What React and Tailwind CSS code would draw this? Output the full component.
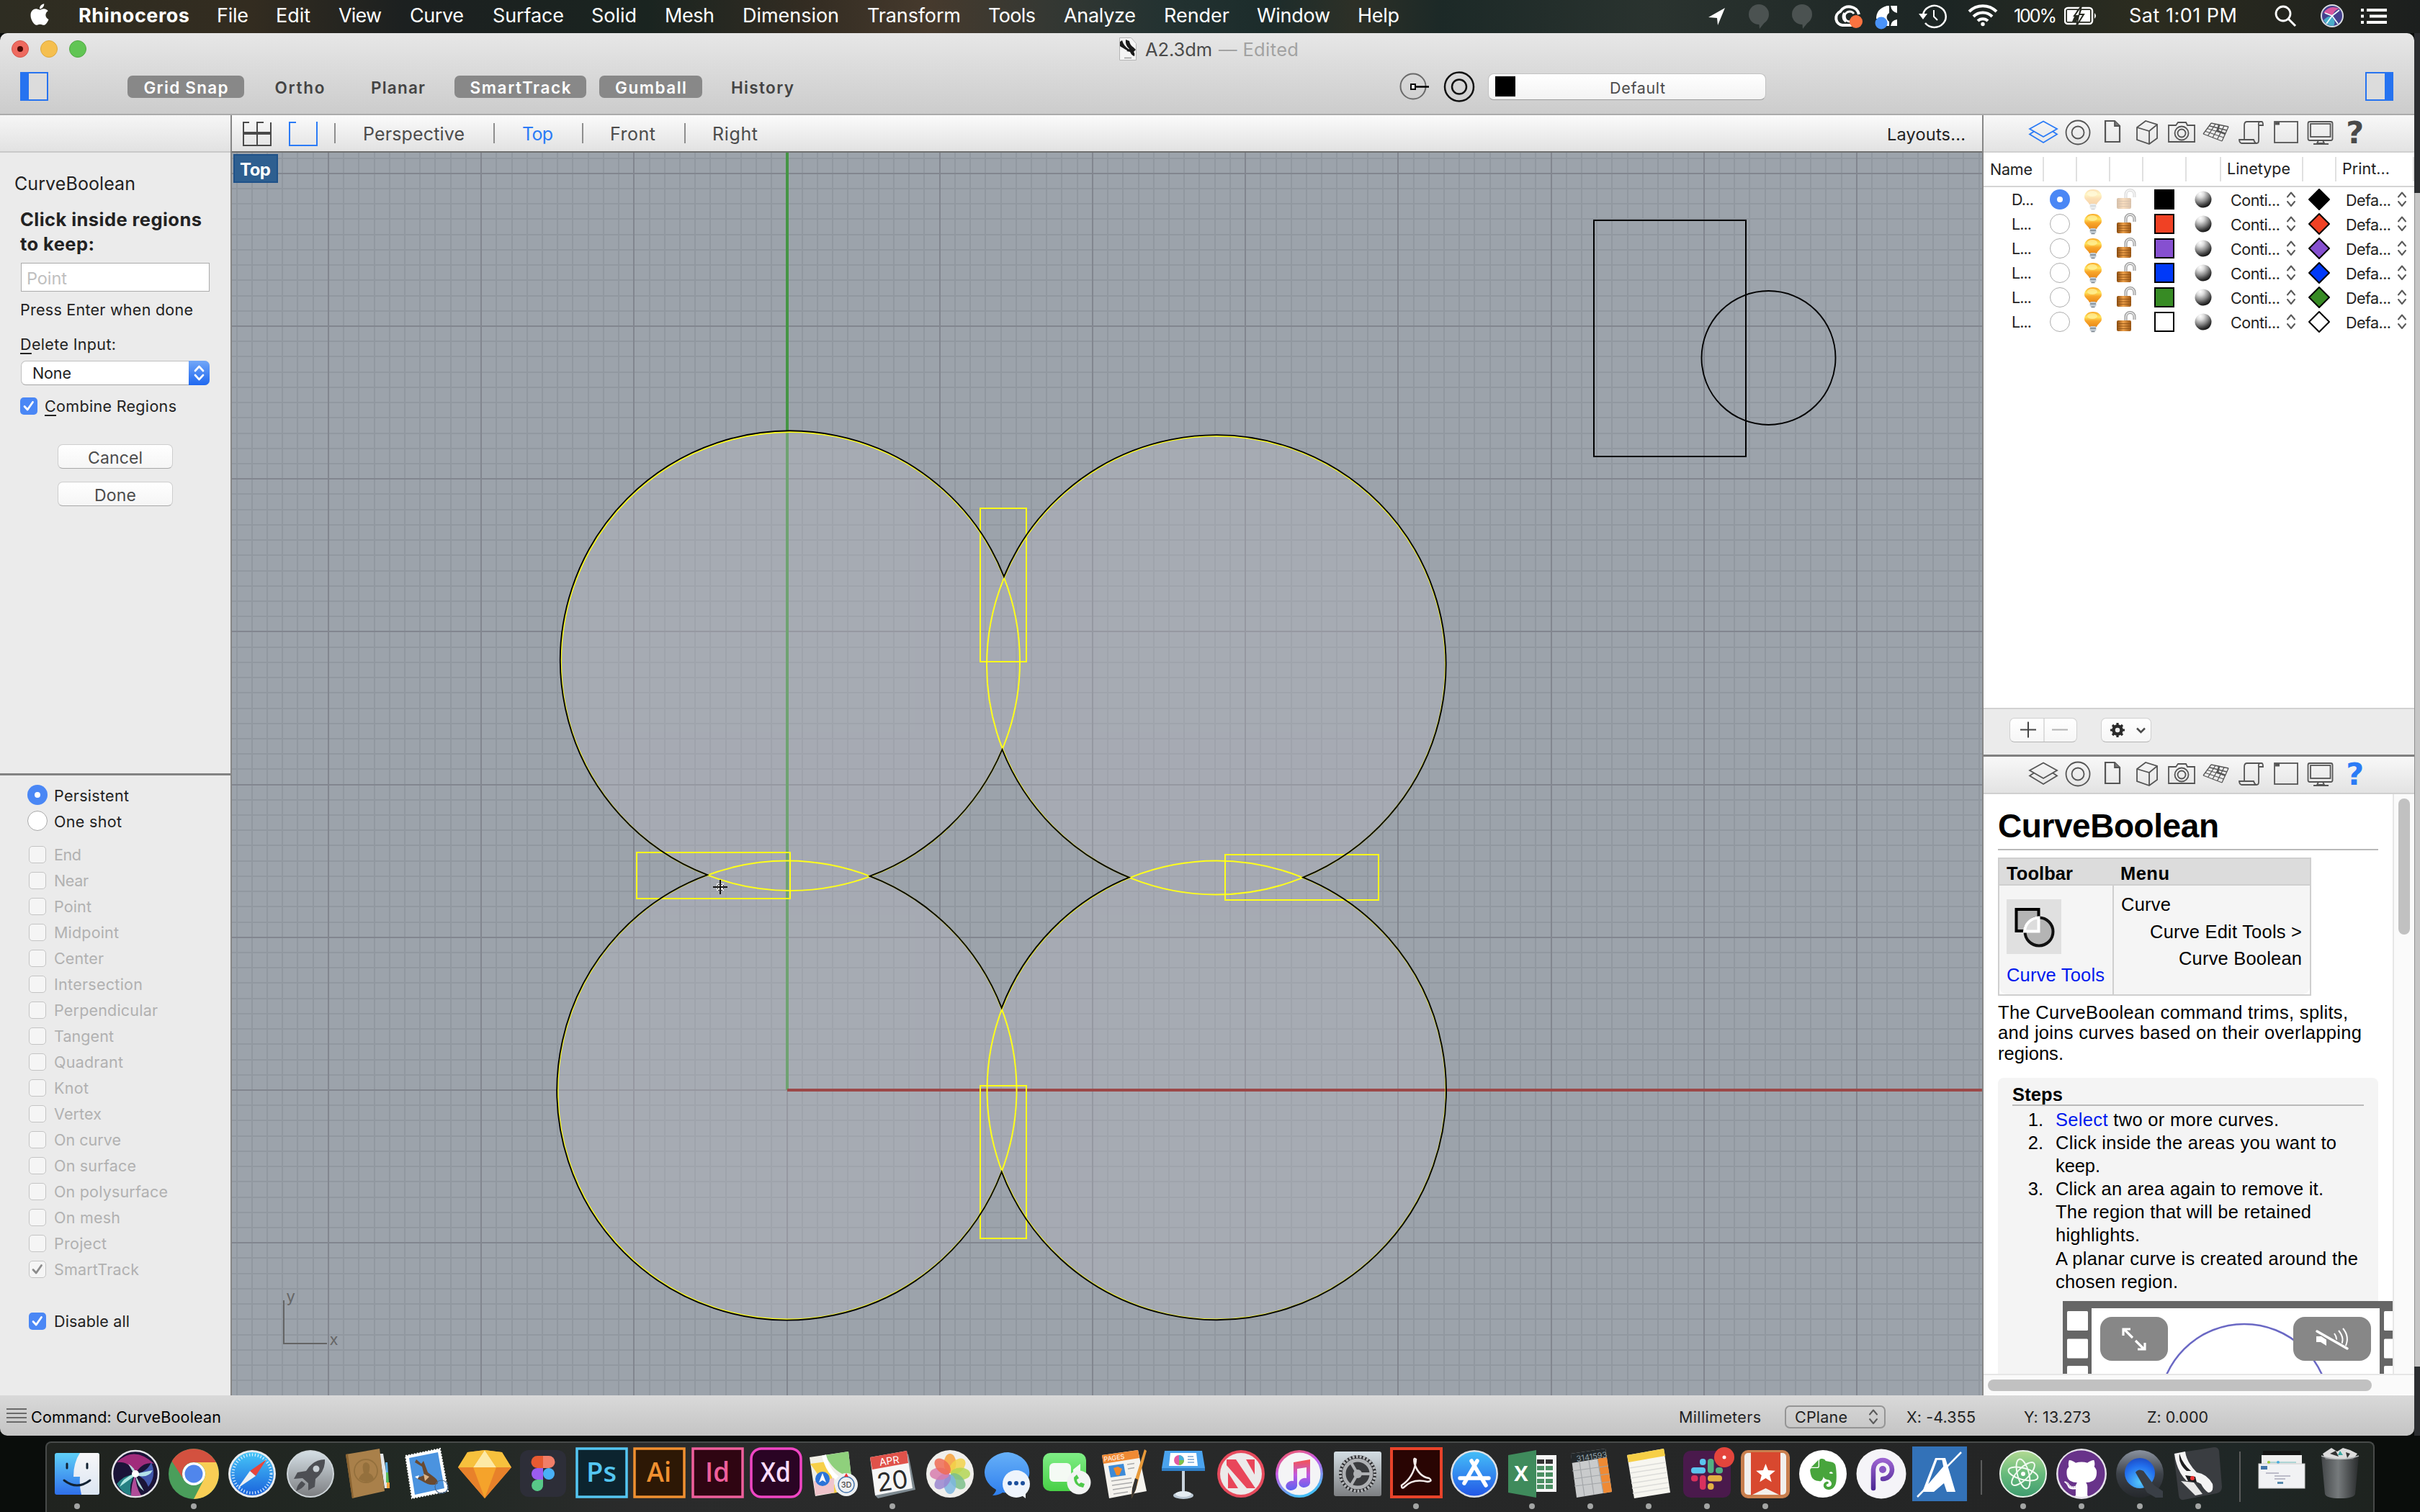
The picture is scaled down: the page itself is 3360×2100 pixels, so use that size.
import React, { useLayoutEffect, useRef } from "react";
import { FaApple, FaEvernote, FaGithub } from "react-icons/fa";

const UI = "font-['Inter',sans-serif]";
const DOC = "font-['Liberation_Sans',sans-serif]";

/* Single line of text whose tracking is adjusted so that it spans w pixels. */
function T({ w, className = "", children }) {
  const ref = useRef(null);
  useLayoutEffect(() => {
    const el = ref.current;
    if (!el || !w) return;
    el.style.letterSpacing = "0px";
    const n = el.textContent.length;
    if (n > 1) {
      const natural = el.getBoundingClientRect().width;
      const s = (w - natural) / (n - 1);
      el.style.letterSpacing = s + "px";
      el.style.marginRight = -s + "px";
    }
  });
  return (
    <span ref={ref} className={"inline-block shrink-0 whitespace-nowrap " + className}>
      {children}
    </span>
  );
}

function Gradients() {
  return (
    <svg className="absolute h-0 w-0">
      <defs>
        <radialGradient id="ball" cx="0.42" cy="0.12" r="0.9">
          <stop offset="0" stopColor="#ffffff" />
          <stop offset="0.25" stopColor="#dcdcdc" />
          <stop offset="0.55" stopColor="#8a8a8a" />
          <stop offset="0.8" stopColor="#3c3c3c" />
          <stop offset="1" stopColor="#0c0c0c" />
        </radialGradient>
        <linearGradient id="bulb" x1="0" y1="0" x2="0" y2="1">
          <stop offset="0" stopColor="#f9a826" />
          <stop offset="0.35" stopColor="#ffe45c" />
          <stop offset="0.6" stopColor="#f9a62a" />
          <stop offset="1" stopColor="#e88a1a" />
        </linearGradient>
        <linearGradient id="lock" x1="0" y1="0" x2="1" y2="0">
          <stop offset="0" stopColor="#8a4a0c" />
          <stop offset="0.45" stopColor="#eda04a" />
          <stop offset="1" stopColor="#9a5512" />
        </linearGradient>
        <radialGradient id="siri" cx="0.5" cy="0.5" r="0.5">
          <stop offset="0" stopColor="#f2ffff" />
          <stop offset="0.25" stopColor="#6fc7dc" />
          <stop offset="0.6" stopColor="#5a2a78" />
          <stop offset="1" stopColor="#1a1236" />
        </radialGradient>
        <linearGradient id="safari" x1="0" y1="0" x2="0" y2="1">
          <stop offset="0" stopColor="#46c6f8" />
          <stop offset="1" stopColor="#1a62dc" />
        </linearGradient>
        <linearGradient id="silver" x1="0" y1="0" x2="0" y2="1">
          <stop offset="0" stopColor="#d4dee4" />
          <stop offset="1" stopColor="#7d7f82" />
        </linearGradient>
        <linearGradient id="finderL" x1="0" y1="0" x2="0" y2="1">
          <stop offset="0" stopColor="#5fd0f8" />
          <stop offset="1" stopColor="#2f6fea" />
        </linearGradient>
        <linearGradient id="finderR" x1="0" y1="0" x2="0" y2="1">
          <stop offset="0" stopColor="#f7f7f9" />
          <stop offset="1" stopColor="#dbe5f2" />
        </linearGradient>
        <linearGradient id="itunes" x1="0" y1="0" x2="0.4" y2="1">
          <stop offset="0" stopColor="#f8584a" />
          <stop offset="0.45" stopColor="#c75bea" />
          <stop offset="1" stopColor="#46bdf5" />
        </linearGradient>
        <linearGradient id="note" x1="0" y1="0" x2="0" y2="1">
          <stop offset="0" stopColor="#f5534f" />
          <stop offset="0.5" stopColor="#c05ae0" />
          <stop offset="1" stopColor="#5a62f0" />
        </linearGradient>
        <linearGradient id="store" x1="0" y1="0" x2="0" y2="1">
          <stop offset="0" stopColor="#44bdf8" />
          <stop offset="1" stopColor="#2358e6" />
        </linearGradient>
        <linearGradient id="green" x1="0" y1="0" x2="0" y2="1">
          <stop offset="0" stopColor="#7fee86" />
          <stop offset="1" stopColor="#48cf46" />
        </linearGradient>
        <linearGradient id="chat" x1="0" y1="0" x2="0" y2="1">
          <stop offset="0" stopColor="#66b0f8" />
          <stop offset="1" stopColor="#2f7fee" />
        </linearGradient>
        <linearGradient id="atom" x1="0" y1="0" x2="0" y2="1">
          <stop offset="0" stopColor="#b2da92" />
          <stop offset="0.5" stopColor="#68bb7c" />
          <stop offset="1" stopColor="#3f9c70" />
        </linearGradient>
        <linearGradient id="purple" x1="0" y1="0" x2="0" y2="1">
          <stop offset="0" stopColor="#9a62cf" />
          <stop offset="1" stopColor="#4f2a96" />
        </linearGradient>
        <radialGradient id="qt" cx="0.5" cy="0.8" r="0.9">
          <stop offset="0" stopColor="#56c8fa" />
          <stop offset="0.6" stopColor="#2270ee" />
          <stop offset="1" stopColor="#1b3fb8" />
        </radialGradient>
        <linearGradient id="ring" x1="0" y1="0" x2="0" y2="1">
          <stop offset="0" stopColor="#8b93a0" />
          <stop offset="0.5" stopColor="#3d4249" />
          <stop offset="1" stopColor="#25282c" />
        </linearGradient>
        <linearGradient id="bin" x1="0" y1="0" x2="1" y2="0">
          <stop offset="0" stopColor="#4c4f52" />
          <stop offset="0.45" stopColor="#8c9093" />
          <stop offset="1" stopColor="#2b2d2f" />
        </linearGradient>
      </defs>
    </svg>
  );
}

/* ---------- menu bar ---------- */

const MENUS = [
  ["w-[192px]", "Rhinoceros", 154, "font-bold"],
  ["w-[82px]", "File", 44, ""],
  ["w-[87px]", "Edit", 48, ""],
  ["w-[99px]", "View", 60, ""],
  ["w-[115px]", "Curve", 75, ""],
  ["w-[137px]", "Surface", 99, ""],
  ["w-[102px]", "Solid", 63, ""],
  ["w-[108px]", "Mesh", 69, ""],
  ["w-[173px]", "Dimension", 134, ""],
  ["w-[168px]", "Transform", 130, ""],
  ["w-[105px]", "Tools", 66, ""],
  ["w-[139px]", "Analyze", 100, ""],
  ["w-[129px]", "Render", 91, ""],
  ["w-[140px]", "Window", 102, ""],
  ["w-[100px]", "Help", 58, ""],
];

function MenuBar() {
  return (
    <div className="flex h-[46px] w-full items-center bg-[linear-gradient(90deg,#2e2d22_0px,#332c20_350px,#1c2020_560px,#1a2420_900px,#332c22_1120px,#463a2d_1290px,#353833_1450px,#233231_1620px,#1c2c2b_1760px,#2d3027_1880px,#1c2927_2000px,#2a332f_2300px,#1c2524_2700px,#2c2c1f_2980px,#1c1f1e_3360px)] text-[27px] leading-[46px] text-white">
      <FaApple className="ml-[38px] mr-[37px] -mt-[6px] shrink-0" size={34} />
      {MENUS.map(([w, t, px, c]) => (
        <div key={t} className={"h-[46px] shrink-0 -mt-[2px] " + w}>
          <T w={px} className={c}>{t}</T>
        </div>
      ))}
      <svg className="ml-auto h-[46px] w-[424px] shrink-0" viewBox="2366 0 424 46">
        <path d="M2395 11 L2372 24 L2384 25 L2385 35 Z" fill="#fff" />
        <g fill="#4b5251">
          <circle cx="2442" cy="20" r="14" /><path d="M2442 30 h9 l-8 10 z" />
          <circle cx="2502" cy="20" r="14" /><path d="M2502 30 h9 l-8 10 z" />
        </g>
        <g fill="none" stroke="#fff" strokeWidth="4">
          <path d="M2572 35 h-14 a10 10 0 0 1 -3 -19 a14 13 0 0 1 26 4" />
          <path d="M2569 30 a7 7 0 1 1 5 -11 M2561 18 a8 8 0 0 0 2 12" strokeWidth="3" />
        </g>
        <circle cx="2577" cy="30" r="9" fill="#fb7340" />
        <path d="M2620 8 h3 v10 a10 8 0 0 0 0 12 v6 h-10 v-10 h-8 q0 -14 15 -18z M2625 8 h9 v10 q-8 -2 -9 -10z M2625 36 h9 v-9 q-8 1 -9 9z" fill="#fff" />
        <circle cx="2612" cy="32" r="8.500" fill="#4a93f8" />
        <path d="M2670 20 a16 15 0 1 1 3 12" fill="none" stroke="#fff" strokeWidth="2.5" />
        <path d="M2664 19 h12 l-6 8 z" fill="#fff" />
        <path d="M2685 14 v9 l5 5" fill="none" stroke="#fff" strokeWidth="2" />
        <g fill="none" stroke="#fff" strokeWidth="4">
          <path d="M2734 16 a27 27 0 0 1 38 0" />
          <path d="M2740 23 a18 18 0 0 1 26 0" />
          <path d="M2746 29 a10 10 0 0 1 14 0" />
        </g>
        <circle cx="2753" cy="33.500" r="2.700" fill="#fff" />
      </svg>
      <div className="-mt-[2px] ml-[6px] h-[46px] w-[70px] shrink-0 text-[25px]"><T w={60}>100%</T></div>
      <svg className="h-[46px] w-[48px] shrink-0" viewBox="2866 0 48 46">
        <rect x="2867" y="11" width="38" height="22" rx="4" fill="none" stroke="#fff" strokeWidth="2.500" />
        <path d="M2870 14 h14 l-7 16 h-7z M2890 14 h12 v16 h-19z" fill="#fff" />
        <path d="M2890 8 l-10 14 h6 l-3 14 l10 -16 h-6z" fill="#fff" stroke="#25281f" strokeWidth="2" />
        <path d="M2908 18 q4 4 0 8z" fill="#fff" />
      </svg>
      <div className="-mt-[2px] ml-[42px] h-[46px] w-[196px] shrink-0"><T w={150}>Sat 1:01 PM</T></div>
      <svg className="h-[46px] w-[208px] shrink-0" viewBox="3152 0 208 46">
        <circle cx="3170" cy="19" r="10" fill="none" stroke="#fff" strokeWidth="2.800" />
        <path d="M3177 26 l10 10" stroke="#fff" strokeWidth="3" />
        <circle cx="3238" cy="22" r="15" fill="#44408e" stroke="#d9dde2" strokeWidth="2" />
        <path d="M3226 18 q8 -12 22 -6 q-8 2 -10 12 q-4 -6 -12 -6z" fill="#e85aa0" opacity="0.9" />
        <path d="M3226 28 q8 -8 12 -4 q6 6 2 12 q-10 0 -14 -8z" fill="#4cc8d8" opacity="0.8" />
        <path d="M3230 33 l8 -11 l8 11 M3228 18 l10 4 l10 -8" stroke="#eff" strokeWidth="1.800" fill="none" />
        <g fill="#fff">
          {[12, 20.5, 29].map((y) => (
            <g key={y}><rect x="3278" y={y} width="4" height="4" /><rect x={y === 20.5 ? 3290 : 3286} y={y} width={y === 20.5 ? 24 : 28} height="4" /></g>
          ))}
        </g>
      </svg>
    </div>
  );
}

/* ---------- title bar ---------- */

function Pill({ on, box, w, children }) {
  return (
    <div className={"flex h-[31px] shrink-0 items-center justify-center rounded-[7px] text-[22.500px] font-semibold leading-[33px] " + box + (on ? " bg-[#888888] text-white" : " text-[#444444]")}>
      <T w={w} className="pt-[2px]">{children}</T>
    </div>
  );
}

function TitleBar() {
  return (
    <div className="h-[114px] w-full rounded-t-[10px] border-b-2 border-[#ababab] bg-gradient-to-b from-[#e7e7e7] to-[#cccccc]">
      <div className="flex h-[44px] items-center pl-4">
        <div className="flex gap-4">
          <div className="flex h-6 w-6 items-center justify-center rounded-full border border-[#d5564b] bg-[#ee6a5f]"><div className="h-2 w-2 rounded-full bg-[#4d0a05]" /></div>
          <div className="h-6 w-6 rounded-full border border-[#dba83f] bg-[#f5bf4f]" />
          <div className="h-6 w-6 rounded-full border border-[#52a845] bg-[#61c554]" />
        </div>
        <svg className="ml-[1434px] -mt-[1px] h-[32px] w-[24px]" viewBox="0 0 24 32">
          <path d="M0.500 0.500 h16 l7 8 v23 h-23z" fill="#f4f4f4" stroke="#b5b5b5" />
          <path d="M1 6 L4 4 Q6 12 14 17 L11 18 Q4 14 1 12z M9 3 L14 5 Q15 11 20 14 L23 17 L20 20 Q22 22 21 26 Q17 25 15 20 L10 19 L14 16 Q8 11 9 3z" fill="#1c1c1c" />
          <path d="M7 28.500 h10" stroke="#999" strokeWidth="1.500" />
        </svg>
        <div className="ml-[12px] h-[30px] w-[102px] text-[25.500px] leading-[32px] text-[#4a4a4a]"><T w={93}>A2.3dm</T></div>
        <div className="h-[30px] text-[25.500px] leading-[32px] text-[#a2a2a2]"><T w={111}>— Edited</T></div>
      </div>
      <div className="flex h-[60px] items-center">
        <div className="ml-[28px] mr-[110px] h-[40px] w-[39px] shrink-0 border-2 border-l-[12px] border-[#2673f0] bg-[#dcdcdc]" />
        <Pill on box="w-[162px]" w={117}>Grid Snap</Pill>
        <Pill box="ml-[43px] w-[68px]" w={69}>Ortho</Pill>
        <Pill box="ml-[65px] w-[75px]" w={75}>Planar</Pill>
        <Pill on box="ml-[41px] w-[183px]" w={140}>SmartTrack</Pill>
        <Pill on box="ml-[18px] w-[143px]" w={99}>Gumball</Pill>
        <Pill box="ml-[40px] w-[87px]" w={87}>History</Pill>
        <svg className="ml-[838px] h-[60px] w-[126px] shrink-0" viewBox="1940 90 126 60">
          <circle cx="1962" cy="120" r="17.500" fill="none" stroke="#6a6a6a" strokeWidth="2" />
          <path d="M1966 120.500 h18" stroke="#000" strokeWidth="2.500" />
          <rect x="1959" y="117" width="6" height="7" fill="#eee" stroke="#000" strokeWidth="2" />
          <circle cx="2026" cy="120.500" r="20" fill="none" stroke="#111" strokeWidth="2.500" />
          <circle cx="2026" cy="120.500" r="10" fill="none" stroke="#111" strokeWidth="2.500" />
        </svg>
        <div className="flex h-[37px] w-[386px] shrink-0 items-center rounded-[8px] border border-[#c2c2c2] border-b-[#9c9c9c] bg-gradient-to-b from-white to-[#f3f3f3]">
          <div className="ml-[9px] h-[28px] w-[28px] bg-black" />
          <div className="ml-[131px] h-[30px] text-[21.500px] leading-[34px] text-[#4c4c4c]"><T w={77}>Default</T></div>
        </div>
        <div className="ml-[832px] h-[40px] w-[39px] shrink-0 border-2 border-r-[12px] border-[#2673f0] bg-[#dcdcdc]" />
      </div>
    </div>
  );
}

/* ---------- left panel ---------- */

function Check({ on, dim }) {
  const box = on && !dim ? "bg-[#4a87f5]" : "border border-[#c4c4c4] bg-[#f5f5f5]";
  return (
    <div className={"flex h-6 w-6 shrink-0 items-center justify-center rounded-[5px] " + box}>
      {on && (
        <svg className="h-[18px] w-[18px]" viewBox="0 0 18 18">
          <path d="M3 9.500 L7.200 14 L14.500 3.500" fill="none" stroke={dim ? "#8c8c8c" : "#fff"} strokeWidth="2.800" strokeLinecap="round" strokeLinejoin="round" />
        </svg>
      )}
    </div>
  );
}

function Radio({ on }) {
  return on ? (
    <div className="flex h-7 w-7 shrink-0 items-center justify-center rounded-full bg-[#4a87f5]"><div className="h-2 w-2 rounded-full bg-white" /></div>
  ) : (
    <div className="h-7 w-7 shrink-0 rounded-full border-[1.500px] border-[#a8a8a8] bg-white" />
  );
}

const SNAPS = [
  ["End", 38], ["Near", 48], ["Point", 52], ["Midpoint", 90], ["Center", 69],
  ["Intersection", 123], ["Perpendicular", 144], ["Tangent", 83], ["Quadrant", 96],
  ["Knot", 48], ["Vertex", 66], ["On curve", 93], ["On surface", 114],
  ["On polysurface", 158], ["On mesh", 92], ["Project", 73], ["SmartTrack", 118, true],
];

function LeftPanel() {
  return (
    <div className="flex w-[320px] shrink-0 flex-col bg-[#ebebeb] text-[#222]">
      <div className="h-[52px] shrink-0 border-b-2 border-[#c9c9c9] bg-gradient-to-b from-[#f6f6f6] to-[#e2e2e2]" />
      <div className="flex h-[862px] shrink-0 flex-col pl-[28px]">
        <div className="-ml-2 mt-[28px] h-[30px] text-[25px] leading-[30px]"><T w={168}>CurveBoolean</T></div>
        <div className="mt-[17px] h-[68px] text-[25.500px] font-bold leading-[35px]">
          <div className="h-[34px]"><T w={252}>Click inside regions</T></div>
          <div className="h-[34px]"><T w={103}>to keep:</T></div>
        </div>
        <div className="ml-px mt-[10px] h-[40px] w-[262px] border-[1.500px] border-[#ababab] bg-white pl-[7px] text-[23.500px] leading-[42px] text-[#bfbfbf]"><T w={56}>Point</T></div>
        <div className="mt-[12px] h-[26px] text-[21.500px] leading-[26px]"><T w={240}>Press Enter when done</T></div>
        <div className="mt-[22px] h-[26px] text-[21.500px] leading-[26px]"><T w={133}><span className="underline decoration-2 underline-offset-4">D</span>elete Input:</T></div>
        <div className="ml-px mt-[10px] flex h-[34px] w-[262px] rounded-[7px] border border-[#c0c0c0] border-b-[#a5a5a5] bg-white pl-[15px] text-[21.500px] leading-[33px]">
          <T w={54}>None</T>
          <svg className="-mr-px -mt-px ml-auto h-[34px] w-[29px]" viewBox="0 0 29 34">
            <defs><linearGradient id="blueStep" x1="0" y1="0" x2="0" y2="1"><stop offset="0" stopColor="#72a7f8" /><stop offset="1" stopColor="#1f68f0" /></linearGradient></defs>
            <path d="M0 0 h22 a7 7 0 0 1 7 7 v20 a7 7 0 0 1 -7 7 h-22z" fill="url(#blueStep)" />
            <path d="M9 14 L14.500 8 L20 14 M9 20 L14.500 26 L20 20" fill="none" stroke="#fff" strokeWidth="2.600" strokeLinecap="round" strokeLinejoin="round" />
          </svg>
        </div>
        <div className="mt-[17px] flex h-6 items-center gap-[10px] text-[21.500px] leading-6"><Check on /><T w={183}><span className="underline decoration-2 underline-offset-4">C</span>ombine Regions</T></div>
        <div className="ml-[52px] mt-[41px] h-[34px] w-[160px] rounded-[7px] border border-[#cecece] border-b-[#a8a8a8] bg-gradient-to-b from-white to-[#f5f5f5] text-center text-[23px] leading-[37px] text-[#4c4c4c]"><T w={76}>Cancel</T></div>
        <div className="ml-[52px] mt-[18px] h-[34px] w-[160px] rounded-[7px] border border-[#cecece] border-b-[#a8a8a8] bg-gradient-to-b from-white to-[#f5f5f5] text-center text-[23px] leading-[37px] text-[#4c4c4c]"><T w={58}>Done</T></div>
      </div>
      <div className="h-[3px] shrink-0 bg-[#828282]" />
      <div className="flex flex-col pt-[9px] text-[21.500px] leading-[36px]">
        <div className="flex h-9 items-center pl-[38px]"><Radio on /><T w={104} className="ml-[9px] pt-px">Persistent</T></div>
        <div className="flex h-9 items-center pl-[38px]"><Radio /><T w={94} className="ml-[9px] pt-px">One shot</T></div>
        <div className="mt-[11px] text-[#b1b1b1]">
          {SNAPS.map(([t, w, on]) => (
            <div key={t} className="flex h-9 items-center pl-[40px]"><Check on={on} dim /><T w={w} className="ml-[11px]">{t}</T></div>
          ))}
        </div>
        <div className="mt-9 flex h-9 items-center pl-[40px]"><Check on /><T w={105} className="ml-[11px]">Disable all</T></div>
      </div>
    </div>
  );
}

/* ---------- viewport ---------- */

const STEP = 21.22;
const range = (a, b) => Array.from({ length: b - a + 1 }, (_, i) => a + i);
const VLINES = range(-36, 78).map((k) => [Math.round(1092.5 + k * STEP) - 1, k % 10 === 0]);
const HLINES = range(-61, 19).map((k) => [Math.round(1514 + k * STEP) - 1, k % 10 === 0]);
const DISCS = [[1097.5, 918.5], [1688.5, 924], [1093, 1514], [1689, 1514]];

function Canvas() {
  return (
    <svg className="block h-[1726px] w-[2430px]" viewBox="322 212 2430 1726">
      <rect x="322" y="212" width="2430" height="1726" fill="#9ca3ab" />
      <g fill="#9198a0" shapeRendering="crispEdges">
        {VLINES.filter((l) => !l[1]).map(([x]) => <rect key={x} x={x} y="212" width="2" height="1726" />)}
        {HLINES.filter((l) => !l[1]).map(([y]) => <rect key={y} x="322" y={y} width="2430" height="2" />)}
      </g>
      <g fill="#82868f" shapeRendering="crispEdges">
        {VLINES.filter((l) => l[1]).map(([x]) => <rect key={x} x={x} y="212" width="2" height="1726" />)}
        {HLINES.filter((l) => l[1]).map(([y]) => <rect key={y} x="322" y={y} width="2430" height="2" />)}
      </g>
      <rect x="1091" y="212" width="4" height="1302" fill="#459545" />
      <g fill="#b9b9c3" opacity="0.36">
        {DISCS.map(([x, y]) => <circle key={x + "-" + y} cx={x} cy={y} r="319" />)}
      </g>
      <rect x="1093" y="1512" width="1659" height="4" fill="#9c4848" />
      <g fill="none" stroke="#ffff1a" strokeWidth="2">
        {DISCS.map(([x, y]) => <circle key={x + "-" + y} cx={x} cy={y} r="318.500" />)}
        <g shapeRendering="crispEdges">
          <rect x="1361" y="706" width="64" height="213" />
          <rect x="884" y="1184" width="213" height="64" />
          <rect x="1701" y="1187" width="213" height="63" />
          <rect x="1361" y="1508" width="64" height="212" />
        </g>
      </g>
      <g fill="none" stroke="#000" strokeWidth="1.900">
        <g transform="translate(-0.300 -0.300)">
          <path d="M1394.200 801.200 A319 319 0 1 1 1809.500 1218.900 A319 319 0 1 1 1391 1627.800 A319 319 0 1 1 982.500 1215.400 A319 319 0 1 1 1394.200 801.200Z" />
          <path d="M1391.800 1041.300 A319 319 0 0 0 1568 1219 A319 319 0 0 0 1391 1400.200 A319 319 0 0 0 1208 1217.100 A319 319 0 0 0 1391.800 1041.300Z" />
        </g>
        <rect x="2213" y="306" width="211" height="328" shapeRendering="crispEdges" />
        <circle cx="2455.500" cy="497" r="93" />
      </g>
      <g shapeRendering="crispEdges">
        <rect x="995" y="1227" width="10" height="10" fill="#eee" />
        <path d="M1000 1222 v20 M990 1232 h20" stroke="#111" strokeWidth="2" />
        <path d="M996 1229 v6 M1004 1229 v6 M997 1228 h6 M997 1236 h6" stroke="#333" strokeWidth="1" />
      </g>
      <path d="M394 1806 V1866 H454" fill="none" stroke="#646464" strokeWidth="2" shapeRendering="crispEdges" />
      <g fill="#666" className={UI} fontSize="22">
        <text x="397.500" y="1808">y</text>
        <text x="457.500" y="1868">x</text>
      </g>
    </svg>
  );
}

function Viewport() {
  const sep = "h-[28px] w-[2px] shrink-0 bg-[#8e8e8e]";
  return (
    <div className="flex w-[2434px] shrink-0 flex-col border-x-2 border-[#868686]">
      <div className="flex h-[52px] items-center border-b-2 border-[#6f6f6f] bg-gradient-to-b from-[#fbfbfb] to-[#e2e2e2] text-[25px] leading-[50px] text-[#4c4c4c]">
        <svg className="h-[50px] w-[142px] shrink-0" viewBox="322 160 142 50">
          <g fill="none" stroke="#4a4a4a" strokeWidth="2" shapeRendering="crispEdges">
            <path d="M346 170 h-8 v32 h38 v-32 M357 169 v33 M366 170 h-9" />
            <path d="M337 185 h40" strokeWidth="4" />
          </g>
          <path d="M411 170 h-9 v32 h38 v-33" fill="none" stroke="#2b7bf6" strokeWidth="2" shapeRendering="crispEdges" />
        </svg>
        <div className={sep} />
        <div className="ml-[38px] w-[181px] shrink-0 pt-[2px]"><T w={141}>Perspective</T></div>
        <div className={sep} />
        <div className="ml-[38px] w-[83px] shrink-0 pt-[2px] text-[#2b7bf6]"><T w={43}>Top</T></div>
        <div className={sep} />
        <div className="ml-[37px] w-[103px] shrink-0 pt-[2px]"><T w={63}>Front</T></div>
        <div className={sep} />
        <div className="ml-[37px] shrink-0 pt-[2px]"><T w={63}>Right</T></div>
        <div className="ml-auto mr-[23px] pt-[4px] text-[23.500px] text-[#222]"><T w={109}>Layouts...</T></div>
      </div>
      <div className="relative h-[1726px]">
        <Canvas />
        <div className="absolute left-[2px] top-[2px] h-[40px] w-[62px] border-2 border-[#1f5289] bg-[#2e5f90] pl-[7px] text-[24px] font-bold leading-[40px] text-white"><T w={43}>Top</T></div>
      </div>
    </div>
  );
}

/* ---------- right panel ---------- */

function PanelTabs({ active }) {
  const c = (i) => (i === active ? "#2b7bf6" : "#555555");
  const grid = range(0, 4);
  const art = [
    <g key="a"><path d="M5 19 L24 8.500 L43 19 L24 30z" /><path d="M11 22.500 L5 26.500 L24 38 L43 26.500 L37 22.500" /></g>,
    <g key="b"><circle cx="24" cy="24" r="16.500" /><circle cx="24" cy="24" r="8.500" /></g>,
    <g key="c"><path d="M14 8 h13 l7 7 v22 h-20z" strokeWidth="2.200" /><path d="M27 8 v7 h7" fill="#777" /></g>,
    <g key="d"><path d="M10 17 L22 8 L38 13 V32 L27 40 L10 34z M10 17 L27 22 L38 13 M27 22 V40" /></g>,
    <g key="e"><path d="M6 14 h10 l3 -4 h11 l2 4 h10 v23 h-36z" /><circle cx="24" cy="25" r="9.500" /><circle cx="24" cy="25" r="5.500" /></g>,
    <g key="f" strokeWidth="1.300">
      {grid.map((k) => <path key={"r" + k} d={`M${17 - k * 2.75} ${11 + k * 3.75} L${41 - k * 2.25} ${16 + k * 5}`} />)}
      {grid.map((k) => <path key={"c" + k} d={`M${17 + k * 6} ${11 + k * 1.25} L${6 + k * 6.5} ${26 + k * 2.5}`} />)}
      <path d="M28 13 L26 22 L37 26" strokeWidth="2.500" />
    </g>,
    <g key="g"><path d="M14 34 V14 q0 -5 4 -5 H38 q2 0 2 5 h-6 V35 q0 4 -3 4 H10 q-3 -1 -3 -5 h20 q1 4 4 5 M34 14 q-1 -4 2 -5" /></g>,
    <g key="h"><rect x="8" y="9" width="32" height="29" /><path d="M9 11.500 h6" strokeWidth="4" /></g>,
    <g key="i"><rect x="6.500" y="9" width="34" height="26" rx="2.500" /><rect x="10" y="12" width="27.500" height="18" /><path d="M21 35 l-2 4 h10 l-2 -4 M14 40 h21" /></g>,
  ];
  return (
    <div className="flex h-[52px] shrink-0 border-b-2 border-[#d0d0d0] bg-gradient-to-b from-[#f8f8f8] to-[#e3e3e3] pl-[59px]">
      {art.map((a, i) => (
        <svg key={i} className="h-[48px] w-[48.100px] shrink-0" viewBox="0 0 48 48" fill="none" stroke={c(i)} strokeWidth="1.800">{a}</svg>
      ))}
      <div className={"h-[50px] w-[48px] text-center text-[43px] leading-[50px] font-['DejaVu_Sans',sans-serif] font-bold " + (active === 9 ? "text-[#2b7bf6]" : "text-[#4a4a4a]")}>
        <span className="inline-block -translate-y-px">?</span>
      </div>
    </div>
  );
}

function Stepper() {
  return (
    <svg className="h-[24px] w-[14px] shrink-0" viewBox="0 0 14 24" fill="none" stroke="#5a5a5a" strokeWidth="2" strokeLinecap="round" strokeLinejoin="round">
      <path d="M2 8.500 L7 2.500 L12 8.500 M2 15 L7 21 L12 15" />
    </svg>
  );
}

function Bulb({ dim }) {
  return (
    <svg className="h-[30px] w-[26px]" viewBox="0 0 26 30" opacity={dim ? 0.35 : 1}>
      <path d="M13 1 C5 1 1 6 1 11 C1 16 6 17 8 22 H18 C20 17 25 16 25 11 C25 6 21 1 13 1z" fill="url(#bulb)" />
      <ellipse cx="12" cy="7" rx="7" ry="4" fill="#fff2a0" opacity="0.7" />
      <rect x="8.500" y="21" width="9" height="7" rx="2" fill="#c3ccd4" />
      <path d="M9 24 h8 M10.500 28.500 h5" stroke="#7b858e" strokeWidth="1.500" />
    </svg>
  );
}

function Padlock({ dim }) {
  return (
    <svg className="h-[30px] w-[28px]" viewBox="0 0 28 30" opacity={dim ? 0.35 : 1}>
      <path d="M13.500 14 V8 a6 6 0 0 1 12 0 V12" fill="none" stroke="#8f8f8f" strokeWidth="4" />
      <path d="M13.500 14 V8 a6 6 0 0 1 12 0 V12" fill="none" stroke="#e4e4e4" strokeWidth="1.800" />
      <rect x="1" y="13" width="20" height="15" rx="2" fill="url(#lock)" />
      <path d="M1 17.500 h20 M1 21 h20 M1 24.500 h20" stroke="#8a4f15" strokeWidth="0.800" />
    </svg>
  );
}

const LAYERS = [
  ["D...", 31, "#000000"], ["L...", 28, "#f04124"], ["L...", 28, "#8650d0"],
  ["L...", 28, "#0039f8"], ["L...", 28, "#378b24"], ["L...", 28, "#ffffff"],
];
const COLUMNS = ["w-[46px]", "w-[46px]", "w-[46px]", "w-[60px]", "w-[48px]"];

function LayerTable() {
  return (
    <div className="flex h-[771px] shrink-0 flex-col bg-white text-[21.500px] text-[#222]">
      <div className="flex h-[48px] shrink-0 items-center border-b-2 border-[#d4d4d4] leading-[44px]">
        <div className="w-[82px] shrink-0 pl-[9px]"><T w={59}>Name</T></div>
        {COLUMNS.map((w, i) => <div key={i} className={"h-[34px] shrink-0 border-l-2 border-[#e0e0e0] " + w} />)}
        <div className="h-[34px] w-[114px] shrink-0 border-l-2 border-[#e0e0e0] pl-[8px] leading-[33px]"><T w={88}>Linetype</T></div>
        <div className="h-[34px] w-[46px] shrink-0 border-l-2 border-[#e0e0e0]" />
        <div className="h-[34px] w-[110px] shrink-0 border-x-2 border-[#e0e0e0] pl-[8px] leading-[33px]"><T w={66}>Print...</T></div>
      </div>
      {LAYERS.map(([n, nw, color], i) => (
        <div key={i} className="flex h-[34px] shrink-0 items-center leading-[34px]">
          <div className="w-[92px] shrink-0 pl-[39px]"><T w={nw}>{n}</T></div>
          {i === 0 ? <Radio on /> : <div className="h-7 w-7 shrink-0 rounded-full border-[1.500px] border-[#adadad] bg-white" />}
          <div className="ml-[19px] flex w-[26px] shrink-0"><Bulb dim={i === 0} /></div>
          <div className="ml-[19px] flex w-[28px] shrink-0"><Padlock dim={i === 0} /></div>
          <svg className="ml-[25px] h-[28px] w-[28px] shrink-0" viewBox="0 0 28 28"><rect x="1" y="1" width="26" height="26" fill={color} stroke="#000" strokeWidth="2" /></svg>
          <svg className="ml-[28px] h-[24px] w-[24px] shrink-0" viewBox="0 0 24 24"><circle cx="12" cy="12" r="11.500" fill="url(#ball)" transform="rotate(-15 12 12)" /></svg>
          <div className="ml-[26px] w-[77px] shrink-0 pt-[2px]"><T w={69}>Conti...</T></div>
          <Stepper />
          <svg className="ml-[16px] h-[32px] w-[32px] shrink-0" viewBox="0 0 32 32"><path d="M16 2 L30 16 L16 30 L2 16z" fill={color} stroke="#000" strokeWidth="2" strokeLinejoin="round" /></svg>
          <div className="ml-[21px] w-[71px] shrink-0 pt-[2px]"><T w={63}>Defa...</T></div>
          <Stepper />
        </div>
      ))}
    </div>
  );
}

function LayerButtons() {
  const box = "flex h-[34px] items-center rounded-[7px] border border-[#d0d0d0] border-b-[#b5b5b5] bg-gradient-to-b from-white to-[#f6f6f6]";
  return (
    <div className="flex h-[65px] shrink-0 border-t-2 border-[#d2d2d2] bg-[#ebebeb] pl-[36px] pt-[12px]">
      <div className={box + " w-[94px]"}>
        <svg className="h-[32px] w-[92px]" viewBox="0 0 92 32">
          <path d="M14 15.500 h22 M25 4.500 v22" stroke="#444" strokeWidth="2" />
          <path d="M47 0 v32" stroke="#d4d4d4" strokeWidth="1.500" />
          <path d="M58 15.500 h22" stroke="#b2b2b2" strokeWidth="2" />
        </svg>
      </div>
      <div className={box + " ml-[33px] w-[70px]"}>
        <svg className="h-[32px] w-[68px]" viewBox="0 0 68 32">
          <g stroke="#2a2a2a" strokeWidth="3.200">
            <path d="M22 6 v20 M12 16 h20 M15 9 l14 14 M29 9 l-14 14" />
          </g>
          <circle cx="22" cy="16" r="5.500" fill="#eee" stroke="#2a2a2a" strokeWidth="4.500" />
          <path d="M49 13.500 l5.500 5.500 l5.500 -5.500" fill="none" stroke="#4a4a4a" strokeWidth="2.500" />
        </svg>
      </div>
    </div>
  );
}

const STEPS = [
  ["1.", "", 310], ["2.", "Click inside the areas you want to", 390], ["", "keep.", 62],
  ["3.", "Click an area again to remove it.", 372], ["", "The region that will be retained", 355],
  ["", "highlights.", 117], ["", "A planar curve is created around the", 420], ["", "chosen region.", 170],
];

function Film() {
  return (
    <svg className="ml-[90px] block h-[102px] w-[458px] shrink-0" viewBox="2864 1807 458 102">
      <rect x="2864" y="1807" width="458" height="102" fill="#666666" />
      <g fill="#fff">
        <rect x="2904" y="1817" width="400" height="92" />
        {[1821, 1859.5, 1897].map((y) => (
          <g key={y}><rect x="2870" y={y} width="29" height="27" rx="1.500" /><rect x="3310" y={y} width="29" height="27" rx="1.500" /></g>
        ))}
      </g>
      <circle cx="3116" cy="1957" r="118" fill="none" stroke="#6a68c4" strokeWidth="2.500" />
      <rect x="2916" y="1829" width="94" height="61" rx="16" fill="#878787" />
      <rect x="3184" y="1829" width="108" height="61" rx="16" fill="#878787" />
      <path d="M2961 1858 L2949 1846 M2948 1855 V1846 H2958 M2965 1862 L2977 1874 M2978 1865 V1874 H2968" fill="none" stroke="#fff" strokeWidth="3.200" />
      <g fill="none" stroke="#fff" strokeWidth="2.500">
        <path d="M3216 1856 h6 l8 -5 v18 l-8 -5 h-6z" fill="#fff" stroke="none" />
        <path d="M3241 1852 q6 8 0 15 M3247 1848 q10 12 2 22 M3253 1845 q10 12 3 26" strokeWidth="2" />
        <path d="M3218 1848 L3260 1876" stroke="#878787" strokeWidth="8" />
        <path d="M3217 1849 L3259 1873" strokeWidth="3.500" strokeLinecap="round" />
      </g>
    </svg>
  );
}

function Help() {
  return (
    <div className={"flex h-[834px] shrink-0 flex-col bg-white text-[25.500px] text-black " + DOC}>
      <div className="flex h-[805px]">
        <div className="flex w-[568px] shrink-0 flex-col overflow-hidden pl-[20px]">
          <div className="mt-[19px] h-[50px] text-[46px] font-bold leading-[50px]"><T w={307}>CurveBoolean</T></div>
          <div className="mt-[7px] h-[2px] w-[528px] shrink-0 bg-[#b9b9b9]" />
          <div className="mt-[10px] h-[192px] w-[435px] shrink-0 border-2 border-[#cfcfcf]">
            <div className="flex h-[37px] border-b-2 border-[#cfcfcf] bg-[#dcdcdc] pl-[10px] font-bold leading-[40px]">
              <div className="w-[158px]"><T w={92}>Toolbar</T></div>
              <T w={68}>Menu</T>
            </div>
            <div className="flex h-[151px]">
              <div className="w-[159px] shrink-0 rounded-bl-[10px] border-r-2 border-[#cfcfcf] bg-[#f5f5f5] pl-[10px] pt-[19px]">
                <svg className="block h-[76px] w-[76px]" viewBox="0 0 76 76">
                  <rect width="76" height="76" fill="#e0e0e0" />
                  <rect x="13.500" y="14" width="31" height="30" fill="#b4b4b4" stroke="#000" strokeWidth="4" />
                  <circle cx="45" cy="45" r="19.500" fill="#b4b4b4" stroke="#111" strokeWidth="4" />
                  <path d="M25 44.500 A20 20 0 0 1 44.500 25.500 V44.500z" fill="#dcdcdc" stroke="#fff" strokeWidth="4" />
                </svg>
                <div className="mt-[13px] h-[30px] leading-[32px] text-[#0019ee]"><T w={136}>Curve Tools</T></div>
              </div>
              <div className="flex grow flex-col rounded-br-[10px] bg-[#f5f5f5] pl-[10px] pr-[11px] pt-[8px] leading-[37.500px]">
                <div className="h-[37.500px]"><T w={69}>Curve</T></div>
                <div className="flex h-[37.500px] justify-end"><T w={211}>Curve Edit Tools &gt;</T></div>
                <div className="flex h-[37.500px] justify-end"><T w={171}>Curve Boolean</T></div>
              </div>
            </div>
          </div>
          <div className="mt-[9px] h-[85px] shrink-0 leading-[28.400px]">
            <div className="h-[28.400px]"><T w={486}>The CurveBoolean command trims, splits,</T></div>
            <div className="h-[28.400px]"><T w={505}>and joins curves based on their overlapping</T></div>
            <div className="h-[28.400px]"><T w={91}>regions.</T></div>
          </div>
          <div className="mt-[20px] h-[310px] w-[528px] shrink-0 rounded-t-[8px] bg-[#f4f4f4] px-5 pt-[8px]">
            <div className="h-[31px] border-b-2 border-[#b9b9b9] font-bold leading-[30px]"><T w={70}>Steps</T></div>
            <div className="mt-[3px]">
              {STEPS.map(([n, t, w], i) => (
                <div key={i} className="flex h-[32.100px] leading-[32.100px]">
                  <div className="w-[43px] shrink-0 text-right">{n}</div>
                  <div className="ml-[17px] flex">
                    {i === 0 ? <T w={w}><span className="text-[#0019ee]">Select</span> two or more curves.</T> : <T w={w}>{t}</T>}
                  </div>
                </div>
              ))}
            </div>
          </div>
          <div className="w-[528px] shrink-0 bg-[#f4f4f4]"><Film /></div>
        </div>
        <div className="w-[30px] shrink-0 border-l-2 border-[#e6e6e6] bg-[#fafafa] pl-[6px] pt-[6px]">
          <div className="h-[189px] w-[16px] rounded-full bg-[#c1c1c1]" />
        </div>
      </div>
      <div className="h-[30px] border-t-2 border-[#e6e6e6] bg-[#fafafa] pl-[6px] pt-[6px]">
        <div className="h-[16px] w-[533px] rounded-full bg-[#c1c1c1]" />
      </div>
    </div>
  );
}

function RightPanel() {
  return (
    <div className="flex w-[598px] shrink-0 flex-col overflow-hidden bg-white">
      <PanelTabs active={0} />
      <LayerTable />
      <LayerButtons />
      <div className="h-[3px] shrink-0 bg-[#808080]" />
      <PanelTabs active={9} />
      <Help />
    </div>
  );
}

/* ---------- status bar ---------- */

function StatusBar() {
  return (
    <div className="flex h-[56px] w-full items-center rounded-b-[10px] bg-gradient-to-b from-[#d9d9d9] to-[#c4c4c4] text-[21.500px] leading-[30px] text-[#222]">
      <div className="ml-[9px] flex h-[20px] w-[28px] shrink-0 flex-col justify-between">
        {[0, 1, 2, 3].map((i) => <div key={i} className="h-[2px] bg-[#6a6a6a]" />)}
      </div>
      <div className="ml-[6px] w-[2288px] shrink-0 pt-[3px] text-black"><T w={264}>Command: CurveBoolean</T></div>
      <div className="w-[147px] shrink-0 pt-[3px]"><T w={114}>Millimeters</T></div>
      <div className="mr-[29px] mt-[3px] flex h-[32px] w-[140px] shrink-0 items-center justify-between rounded-[7px] border-2 border-[#959595] pl-[12px] pr-[8px]">
        <T w={73}>CPlane</T>
        <Stepper />
      </div>
      <div className="w-[163px] shrink-0 pt-[3px]"><T w={96}>X: -4.355</T></div>
      <div className="w-[171px] shrink-0 pt-[3px]"><T w={93}>Y: 13.273</T></div>
      <div className="shrink-0 pt-[3px]"><T w={85}>Z: 0.000</T></div>
    </div>
  );
}

/* ---------- dock ---------- */

function Adobe({ fg, bg, label, round }) {
  return (
    <g>
      <rect x="6" y="5" width="69" height="67" rx={round ? 14 : 0} fill={bg} stroke={fg} strokeWidth="3.500" />
      <text x="40" y="51" textAnchor="middle" fontSize="37" fontWeight="600" fill={label === "Xd" ? "#fbdcfb" : fg} fontFamily="Open Sans, sans-serif" textLength={label === "Ai" || label === "Id" ? 34 : 42} lengthAdjust="spacingAndGlyphs">{label}</text>
    </g>
  );
}

const star = (n, r1, r2, cx, cy) =>
  range(0, n * 2 - 1).map((i) => {
    const r = i % 2 ? r2 : r1;
    const a = (Math.PI * i) / n - Math.PI / 2;
    return (cx + r * Math.cos(a)).toFixed(1) + "," + (cy + r * Math.sin(a)).toFixed(1);
  }).join(" ");

const PETALS = ["#f7a13a", "#f2d24a", "#b4d655", "#7cc08a", "#7db6e0", "#9a86d0", "#d77cae", "#ee6b55"];

const APPS = [
  ["finder", true, <g key="x">
    <rect x="9" y="11" width="62" height="58" rx="3" fill="url(#finderL)" />
    <path d="M44 11 H68 a3 3 0 0 1 3 3 V66 a3 3 0 0 1 -3 3 H46 Q43 58 44 44 H35 Q35 24 44 11z" fill="url(#finderR)" />
    <path d="M26 26 v6 M54 26 v6" stroke="#123" strokeWidth="3" strokeLinecap="round" />
    <path d="M22 49 q18 14 36 0" fill="none" stroke="#123" strokeWidth="3" strokeLinecap="round" />
  </g>],
  ["siri", false, <g key="x">
    <circle cx="40" cy="40" r="32" fill="#1b1438" stroke="#e6e6ea" strokeWidth="2.500" />
    <path d="M14 24 Q38 0 66 26 Q50 22 40 40 Q32 22 14 24z" fill="#b83087" opacity="0.85" />
    <path d="M62 24 Q70 42 58 58 Q54 46 40 40 Q56 38 62 24z" fill="#4b68c8" opacity="0.8" />
    <path d="M40 40 Q24 42 14 54 Q22 68 34 70 Q30 54 40 40z" fill="#2aa59c" opacity="0.75" />
    <path d="M40 40 Q40 58 48 70 Q38 72 34 70 Q34 54 40 40z" fill="#d45ab0" opacity="0.8" />
    <path d="M40 40 L64 35 Q58 47 40 42 L52 64 Q42 58 40 42 L18 58 Q22 46 38 40 L30 26 Q40 32 40 40z" fill="#c9fbf5" opacity="0.85" />
    <circle cx="40" cy="40" r="5" fill="#fff" />
  </g>],
  ["chrome", true, <g key="x">
    <circle cx="40" cy="40" r="35" fill="#4a9e5b" />
    <path d="M9.700 22.500 A35 35 0 0 1 71 24 H40 A16 16 0 0 0 26 48z" fill="#d3513f" />
    <path d="M71 24 A35 35 0 0 1 40 75 L54 48 A16 16 0 0 0 40 24z" fill="#f8ce55" />
    <circle cx="40" cy="40" r="16" fill="#fff" /><circle cx="40" cy="40" r="12.500" fill="#5086ec" />
  </g>],
  ["safari", false, <g key="x">
    <circle cx="40" cy="40" r="33" fill="#e9ebee" /><circle cx="40" cy="40" r="30" fill="url(#safari)" />
    <circle cx="40" cy="40" r="26.500" fill="none" stroke="#dff2ff" strokeWidth="4" strokeDasharray="1.200 2.800" />
    <path d="M60 20 L45 43 L37 36z" fill="#e8453c" /><path d="M20 60 L45 43 L37 36z" fill="#eef0f2" />
  </g>],
  ["launchpad", false, <g key="x">
    <circle cx="40" cy="40" r="33" fill="#cfd6da" /><circle cx="40" cy="40" r="31" fill="url(#silver)" />
    <path d="M60 20 Q44 20 34 36 L22 38 L17 47 L29 46 L37 53 L37 63 L46 58 L47 47 Q61 36 60 20z" fill="#4d4f54" />
    <circle cx="48" cy="33" r="4.500" fill="#c9d0d5" /><path d="M28 50 Q22 54 20 64 Q30 60 33 54z" fill="#4d4f54" />
  </g>],
  ["contacts", false, <g key="x">
    <path d="M56 12 h5 l8 48 h-6z" fill="#e4e8ea" /><path d="M64 24 h3 l1 16 h-3z" fill="#5fb0e8" /><path d="M65 38 h3 l1 14 h-4z" fill="#5ac05a" /><path d="M66 52 h4 v8 h-4z" fill="#f0a33a" />
    <path d="M9 13 L56 5 L63 64 L18 74z" fill="#a9804a" /><path d="M9 13 L12 12.500 L20 73 L18 74z" fill="#8a6331" />
    <circle cx="37" cy="36" r="16" fill="none" stroke="#94703d" strokeWidth="1.800" /><path d="M27 47 q3 -7 7 -8 q-4 -14 3 -15 q8 1 4 15 q5 1 7 8 q-10 8 -21 0z" fill="#94703d" />
  </g>],
  ["mail", false, <g key="x">
    <path d="M11 15 L59 5 L70 64 L20 74z" fill="#fff" stroke="#fff" strokeWidth="2" strokeDasharray="2 2" />
    <path d="M16 18 L56 10 L65 60 L24 69z" fill="#4b93df" />
    <path d="M24 24 L34 30 L37 42 L26 46 L34 50 Q46 58 55 54 Q58 50 50 44 L42 38 L36 22 L33 26 L26 20z" fill="#6a4a30" /><path d="M36 40 l8 4 l-6 6z" fill="#d9b48a" /><path d="M24 44 l6 -2 l-2 5z" fill="#fff" />
    <circle cx="61" cy="58" r="9" fill="none" stroke="#47678f" strokeWidth="1.200" />
  </g>],
  ["sketch", false, <g key="x">
    <path d="M16 10 L40 7 L64 10 L77 31 L40 74 L3 31z" fill="#f3a52c" />
    <path d="M40 7 L56 31 H24z" fill="#fde9a6" /><path d="M40 7 L64 10 L77 31 H56z M40 7 L16 10 L3 31 H24z" fill="#f7c13d" />
    <path d="M24 31 H56 L40 74z" fill="#f5a32b" /><path d="M3 31 H24 L40 74z M56 31 H77 L40 74z" fill="#e8812a" />
  </g>],
  ["figma", false, <g key="x">
    <rect x="8" y="7" width="64" height="65" rx="12" fill="#2d2e38" />
    <path d="M40 15 V32 H32 a8.500 8.500 0 0 1 0 -17z" fill="#e85a31" /><path d="M40 15 H48 a8.500 8.500 0 0 1 0 17 H40z" fill="#f27e68" />
    <path d="M40 32 V48 H32 a8 8 0 0 1 0 -16z" fill="#9b5cf0" /><circle cx="48" cy="40" r="8" fill="#48b0f6" /><path d="M40 48 V55 a8 8 0 1 1 -8 -7z" fill="#58c888" />
  </g>],
  ["ps", false, <Adobe key="x" fg="#54c6f2" bg="#0c242f" label="Ps" />],
  ["ai", false, <Adobe key="x" fg="#f09030" bg="#2d1805" label="Ai" />],
  ["id", false, <Adobe key="x" fg="#ef5f9c" bg="#2f0512" label="Id" />],
  ["xd", false, <Adobe key="x" fg="#f046c4" bg="#2a0424" label="Xd" round />],
  ["maps", false, <g key="x">
    <path d="M6 17 L60 9 L66 62 L14 71z" fill="#f0efe6" /><path d="M28 14 L60 9 L64 44 Q40 40 28 14z" fill="#8fd07c" /><path d="M7 26 L30 23 L44 66 L36 67z" fill="#f7d049" /><path d="M12 50 L40 46 L40 66 L14 70z" fill="#efc4cb" />
    <path d="M26 14 Q34 50 66 54" fill="none" stroke="#fff" strokeWidth="6" />
    <circle cx="24" cy="47" r="10" fill="#2b74d8" /><path d="M24 39 l5 13 l-5 -3 l-5 3z" fill="#fff" />
    <circle cx="57" cy="55" r="16" fill="#eef0f2" /><circle cx="57" cy="55" r="11" fill="none" stroke="#4c7ab0" strokeWidth="1.500" /><text x="57" y="59" textAnchor="middle" fontSize="11" fill="#333" fontFamily="Inter, sans-serif">3D</text><path d="M57 39 l3 5 h-6z" fill="#e33" />
  </g>],
  ["calendar", true, <g key="x">
    <path d="M62 12 L72 62 L20 74 L16 70z" fill="#7e8a91" />
    <path d="M9 17 L60 8 L68 60 L16 70z" fill="#f7f7f7" /><path d="M9 17 L60 8 L62 25 L12 34z" fill="#e0524a" />
    <text x="36" y="27" textAnchor="middle" fontSize="14" fill="#fff" fontFamily="Inter, sans-serif" transform="rotate(-9 36 24)">APR</text>
    <text x="40" y="62" textAnchor="middle" fontSize="35" fill="#2c2c2c" fontFamily="Inter, sans-serif" transform="rotate(-8 40 50)">20</text>
  </g>],
  ["photos", false, <g key="x">
    <circle cx="40" cy="40" r="33" fill="#f0efec" />
    {PETALS.map((c, i) => <ellipse key={c} cx="40" cy="25.500" rx="8.500" ry="13.500" fill={c} opacity="0.85" transform={`rotate(${i * 45} 40 40)`} />)}
  </g>],
  ["messages", false, <g key="x">
    <path d="M40 10 a33 28 0 1 1 -8 56 q-6 4 -14 4 q5 -5 5 -8 A33 28 0 0 1 40 10z" fill="url(#chat)" />
    <circle cx="51" cy="54" r="19" fill="#eef4fc" /><path d="M56 68 l8 6 v-12z" fill="#eef4fc" />
    <g fill="#1c4f9c"><circle cx="42" cy="53" r="3" /><circle cx="51" cy="53" r="3" /><circle cx="60" cy="53" r="3" /></g>
  </g>],
  ["facetime", false, <g key="x">
    <rect x="7" y="11" width="60" height="53" rx="10" fill="url(#green)" /><rect x="16" y="25" width="30" height="26" rx="6" fill="#f4faf4" /><path d="M49 34 l10 -8 v24 l-10 -8z" fill="#f4faf4" />
    <circle cx="57" cy="52" r="16.500" fill="#f2f4f3" /><path d="M50 45 q0 12 13 14 l2 -5 l-5 -2 l-3 2 q-3 -3 -3 -6 l3 -2 l-3 -5z" fill="#4ec94a" />
  </g>],
  ["pages", false, <g key="x">
    <path d="M8 14 L58 7 L70 64 L18 74z" fill="#f5f3ee" /><path d="M8 14 L58 7 L60 18 L10 26z" fill="#f08a33" />
    <text x="25" y="21" textAnchor="middle" fontSize="9" fill="#fff" fontFamily="Inter, sans-serif" transform="rotate(-8 25 18)">PAGES</text>
    <path d="M17 29 L38 26 L41 42 L20 45z" fill="#3d8bd8" /><path d="M24 32 l6 -2 l6 3 l-4 9 h-4z" fill="#f28a2a" />
    <path d="M43 27 l10 -1.500 M44 33 l9 -1.500 M21 50 l28 -4 M22 56 l28 -4 M23 62 l26 -4 M24 68 l20 -3" stroke="#aaa" strokeWidth="1.500" />
    <path d="M67 6 L50 60 L49 74 L55 62 L70 8z" fill="#e89a3a" /><path d="M50 60 L49 74 L55 62 L58 48 L54 46z" fill="#333" />
  </g>],
  ["keynote", false, <g key="x">
    <rect x="38" y="32" width="4" height="38" fill="#c9d3dc" /><ellipse cx="40" cy="70" rx="14" ry="5" fill="#b9c6d2" /><ellipse cx="40" cy="68" rx="11" ry="4" fill="#e4ecf2" />
    <path d="M14 8 H66 L70 32 H10z" fill="#4aa3ee" /><path d="M10 32 h60 v4 h-60z" fill="#2f7fc8" />
    <path d="M22 11 h36 l2 18 h-40z" fill="#fff" /><circle cx="34" cy="21" r="7" fill="#e15aa2" /><path d="M34 21 v-7 a7 7 0 0 1 7 7z" fill="#45b3d8" /><path d="M34 21 h7 a7 7 0 0 1 -7 7z" fill="#7cc24a" />
    <path d="M46 16 h8 M46 20 h9 M46 24 h9" stroke="#9bd" strokeWidth="2" />
  </g>],
  ["news", false, <g key="x">
    <circle cx="40" cy="40" r="33" fill="#e64a5c" /><circle cx="40" cy="40" r="29" fill="#eceaea" />
    <path d="M20 20 h13 L60 60 H48 L20 28z M22 38 L36 60 H22z M47 20 H59 V41z" fill="#e9465a" />
  </g>],
  ["itunes", false, <g key="x">
    <circle cx="40" cy="40" r="33" fill="url(#itunes)" /><circle cx="40" cy="40" r="29.500" fill="#f4f4f6" />
    <path d="M32 24 L55 20 V53 a8 6.500 -15 1 1 -5 -7 V31 L37 33 V57 a8 6.500 -15 1 1 -5 -7z" fill="url(#note)" />
  </g>],
  ["prefs", false, <g key="x">
    <rect x="7" y="9" width="66" height="62" rx="3" fill="url(#silver)" />
    <circle cx="40" cy="40" r="26" fill="#27282b" /><circle cx="40" cy="40" r="24" fill="none" stroke="#b5b7ba" strokeWidth="4" strokeDasharray="3 2" /><circle cx="40" cy="40" r="19" fill="#3a3b3e" stroke="#aeb0b3" strokeWidth="5" />
    <path d="M40 40 H60 M40 40 L30 23 M40 40 L30 57" stroke="#aeb0b3" strokeWidth="4" /><circle cx="40" cy="40" r="6" fill="#aeb0b3" />
  </g>],
  ["acrobat", true, <g key="x">
    <rect x="6" y="5" width="69" height="67" fill="#290503" stroke="#e8432a" strokeWidth="4" />
    <path d="M20 56 Q38 44 40 20 Q36 16 38 26 Q44 44 58 46 Q64 50 56 51 Q36 46 24 58 Q20 62 20 56z" fill="none" stroke="#f4eceb" strokeWidth="2.500" />
  </g>],
  ["store", false, <g key="x">
    <circle cx="40" cy="40" r="33" fill="#dfe2e6" /><circle cx="40" cy="40" r="30.500" fill="url(#store)" />
    <path d="M44 22 L26 53 M36 22 L56 56 M20 46 H60" stroke="#fff" strokeWidth="5.500" strokeLinecap="round" />
  </g>],
  ["excel", true, <g key="x">
    <rect x="44" y="14" width="30" height="51" fill="#f7f7f7" />
    {[20, 29, 38, 47, 55].map((y) => <g key={y} fill={y === 20 ? "#333" : "#4c8f63"}><rect x="47" y={y} width="10" height="6" /><rect x="59" y={y} width="10" height="6" /></g>)}
    <path d="M7 14 L46 7 V73 L7 66z" fill="#3f8b5c" />
    <text x="25" y="50" textAnchor="middle" fontSize="29" fontWeight="700" fill="#fff" fontFamily="Open Sans, sans-serif">X</text>
  </g>],
  ["calc", true, <g key="x">
    <path d="M13 12 L61 5 L70 65 L21 73z" fill="#c9cbcc" /><path d="M13 12 L61 5 L63 17 L14 25z" fill="#23282b" /><path d="M50 19 L63 17 L70 65 L58 67z" fill="#ef8a34" />
    <text x="42" y="20" textAnchor="middle" fontSize="11" fill="#8fa0a8" fontFamily="Inter, sans-serif" transform="rotate(-8 42 16)">3141593</text>
    <path d="M15 36 L65 29 M17 47 L66 40 M18 57 L68 51 M25 23 L32 71 M38 21 L45 69 M50 19 L58 67" stroke="#a2a5a8" strokeWidth="1.200" />
  </g>],
  ["notes", true, <g key="x">
    <path d="M10 14 L61 5 L70 66 L20 74z" fill="#f7f6f0" /><path d="M10 14 L61 5 L63 15 L12 24z" fill="#f7cf46" />
    <path d="M13 32 L64 24 M14 39 L65 31 M15 46 L66 38 M16 53 L67 45 M17 60 L68 52 M18 67 L69 59" stroke="#dcdcd9" strokeWidth="1.500" />
  </g>],
  ["slack", true, <g key="x">
    <rect x="7" y="8" width="66" height="65" rx="10" fill="#4a1a4c" />
    <g fill="#5bc4ee"><rect x="18" y="31" width="20" height="8.500" rx="4" /><rect x="30" y="19" width="8.500" height="9" rx="4" /></g>
    <g fill="#52b083"><rect x="41" y="19" width="8.500" height="20" rx="4" /><rect x="52" y="31" width="10" height="8.500" rx="4" /></g>
    <g fill="#e2b044"><rect x="41" y="42" width="20" height="8.500" rx="4" /><rect x="41" y="53" width="8.500" height="9" rx="4" /></g>
    <g fill="#d8315e"><rect x="30" y="42" width="8.500" height="20" rx="4" /><rect x="18" y="42" width="9.500" height="8.500" rx="4" /></g>
    <circle cx="64" cy="17" r="14" fill="#e4453c" /><circle cx="64" cy="17" r="2.500" fill="#fff" />
  </g>],
  ["wunder", true, <g key="x">
    <rect x="6" y="7" width="68" height="67" rx="10" fill="#c97f4e" /><rect x="11" y="11" width="58" height="58" rx="5" fill="#f2efec" />
    <path d="M20 10 H61 V70 L40.500 60 L20 70z" fill="#d8482f" /><polygon points={star(5, 14, 6, 40.5, 40)} fill="#fff" />
  </g>],
  ["evernote", false, <g key="x"><circle cx="40" cy="40" r="33" fill="#fff" /><FaEvernote x="16" y="16" size={49} color="#48a53c" /></g>],
  ["p", false, <g key="x">
    <circle cx="40" cy="40" r="34.500" fill="#f5f4f8" />
    <path d="M29 60 V34 a13 13 0 1 1 13 13" fill="none" stroke="url(#purple)" strokeWidth="6.500" strokeLinecap="round" /><circle cx="42" cy="34" r="5" fill="#8a57c4" />
  </g>],
  ["drafting", false, <g key="x">
    <rect x="2" y="2" width="76" height="76" fill="#3372b8" />
    <path d="M16 65 L34 18 H48 L62 65 H50 L46 53 L32 65z" fill="#fff" /><path d="M22 58 L36 20 H44 L46 30z" fill="#3372b8" stroke="#fff" strokeWidth="1.500" /><path d="M9 72 L70 10" stroke="#fff" strokeWidth="2.500" />
  </g>],
];

const RUNNING = [
  ["atom", true, <g key="x">
    <circle cx="40" cy="40" r="32" fill="url(#atom)" stroke="#e9f3ea" strokeWidth="2" />
    <g fill="none" stroke="#f0faf0" strokeWidth="2"><ellipse cx="40" cy="40" rx="21" ry="8" transform="rotate(15 40 40)" /><ellipse cx="40" cy="40" rx="21" ry="8" transform="rotate(75 40 40)" /><ellipse cx="40" cy="40" rx="21" ry="8" transform="rotate(135 40 40)" /></g><circle cx="40" cy="40" r="3" fill="#fff" />
  </g>],
  ["github", true, <g key="x"><circle cx="40" cy="40" r="35" fill="#e6e2ea" /><circle cx="40" cy="40" r="32" fill="#fff" /><FaGithub x="6.500" y="6.500" size={67} color="#68338a" /></g>],
  ["quicktime", true, <g key="x">
    <circle cx="40" cy="40" r="33" fill="url(#ring)" /><circle cx="40" cy="39" r="21" fill="url(#qt)" />
    <path d="M34 38 Q38 32 45 36 L60 56 L72 64 V73 H62 L50 66z" fill="#3a3f46" />
  </g>],
  ["rhino", true, <g key="x">
    <path d="M6 12 L62 3 Q68 3 69 8 L73 58 Q73 65 66 67 L20 76 Q14 77 13 70z" fill="#3a3d41" />
    <path d="M7 12 L22 9 Q24 24 38 38 Q52 40 60 54 Q62 66 54 66 Q48 62 44 54 Q34 48 24 50 Q10 36 7 12z" fill="#f4f4f4" />
    <path d="M16 50 L36 70 L46 68 L34 52z" fill="#e8e8e8" /><path d="M14 12 Q18 26 30 36 L24 36 Q12 26 14 12z M22 42 l14 2 l2 8 l-12 -2z" fill="#1c1c1e" /><circle cx="32" cy="46" r="3" fill="#e33" />
  </g>],
];

const FILES = [
  ["windows", false, <g key="x">
    <rect x="14" y="8" width="52" height="6" fill="#141414" /><rect x="12" y="14" width="56" height="24" fill="#eeeeee" /><path d="M20 24 h40" stroke="#9cc" strokeWidth="1.500" /><circle cx="22" cy="24" r="2" fill="#9c3" /><circle cx="35" cy="24" r="2" fill="#4ad" />
    <rect x="8" y="26" width="64" height="34" fill="#f1f2f4" stroke="#ccc" /><rect x="11" y="29" width="9" height="5" fill="#47a" /><path d="M18 39 h18 M30 43 h22 M30 47 h15" stroke="#aab" strokeWidth="1.500" /><rect x="34" y="51" width="8" height="3" fill="#58a" />
  </g>],
  ["trash", false, <g key="x">
    <path d="M16 12 L28 4 L36 9 L44 4 L54 7 L64 12 L58 20 H20z" fill="#ddd" /><path d="M26 12 l8 -4 l4 8 z M48 10 l6 2 l-4 6z" fill="#333" /><path d="M40 8 l4 6 h-7z" fill="#3aa7a0" />
    <path d="M14 15 Q40 24 66 15 L61 68 Q59 74 40 74 Q21 74 19 68z" fill="url(#bin)" opacity="0.8" /><path d="M14 15 Q40 24 66 15" fill="none" stroke="#b9bcbe" strokeWidth="1.500" />
  </g>],
];

function DockCell({ item }) {
  return (
    <div className="flex h-[96px] w-[80.800px] shrink-0 flex-col items-center pt-[3px]">
      <svg className="mb-px h-[80px] w-[80px] overflow-visible" viewBox="0 0 80 80">{item[2]}</svg>
      {item[1] && <div className="h-2 w-2 rounded-full bg-[#a3a5a4]" />}
    </div>
  );
}

function Dock() {
  return (
    <div className="ml-[63px] mt-[8px] flex h-[98px] w-[3234px] rounded-t-[8px] border-x-2 border-t-2 border-[#474a49] bg-[linear-gradient(90deg,#20231f_0,#222924_17%,#2a2b2b_25%,#282929_50%,#242525_85%,#1f2726_94%,#1e231f_100%)] pl-[2px]">
      {APPS.map((a) => <DockCell key={a[0]} item={a} />)}
      <div className="flex w-[35.600px] shrink-0 items-start justify-center"><div className="mt-[24px] h-[48px] w-[2px] bg-[#5b5c5c]" /></div>
      {RUNNING.map((a) => <DockCell key={a[0]} item={a} />)}
      <div className="flex w-[35.600px] shrink-0 items-start justify-center"><div className="mt-[12px] h-[70px] w-[2px] bg-[#5b5c5c]" /></div>
      {FILES.map((a) => <DockCell key={a[0]} item={a} />)}
    </div>
  );
}

export default function App() {
  return (
    <div className={"h-[2100px] w-[3360px] overflow-hidden bg-[#0a0d0b] " + UI}>
      <Gradients />
      <MenuBar />
      <div className="flex h-[1948px]">
        <div className="flex w-[3352px] shrink-0 flex-col">
          <TitleBar />
          <div className="flex h-[1778px] shrink-0">
            <LeftPanel />
            <Viewport />
            <RightPanel />
          </div>
          <StatusBar />
        </div>
        <div className="flex w-[8px] flex-col">
          <div className="h-[222px] bg-[#2b2d30]" />
          <div className="h-[1630px] border-l border-[#8f8f8f] bg-[#c6c6c6]" />
          <div className="h-[96px] bg-[#2b2d30]" />
        </div>
      </div>
      <Dock />
    </div>
  );
}
